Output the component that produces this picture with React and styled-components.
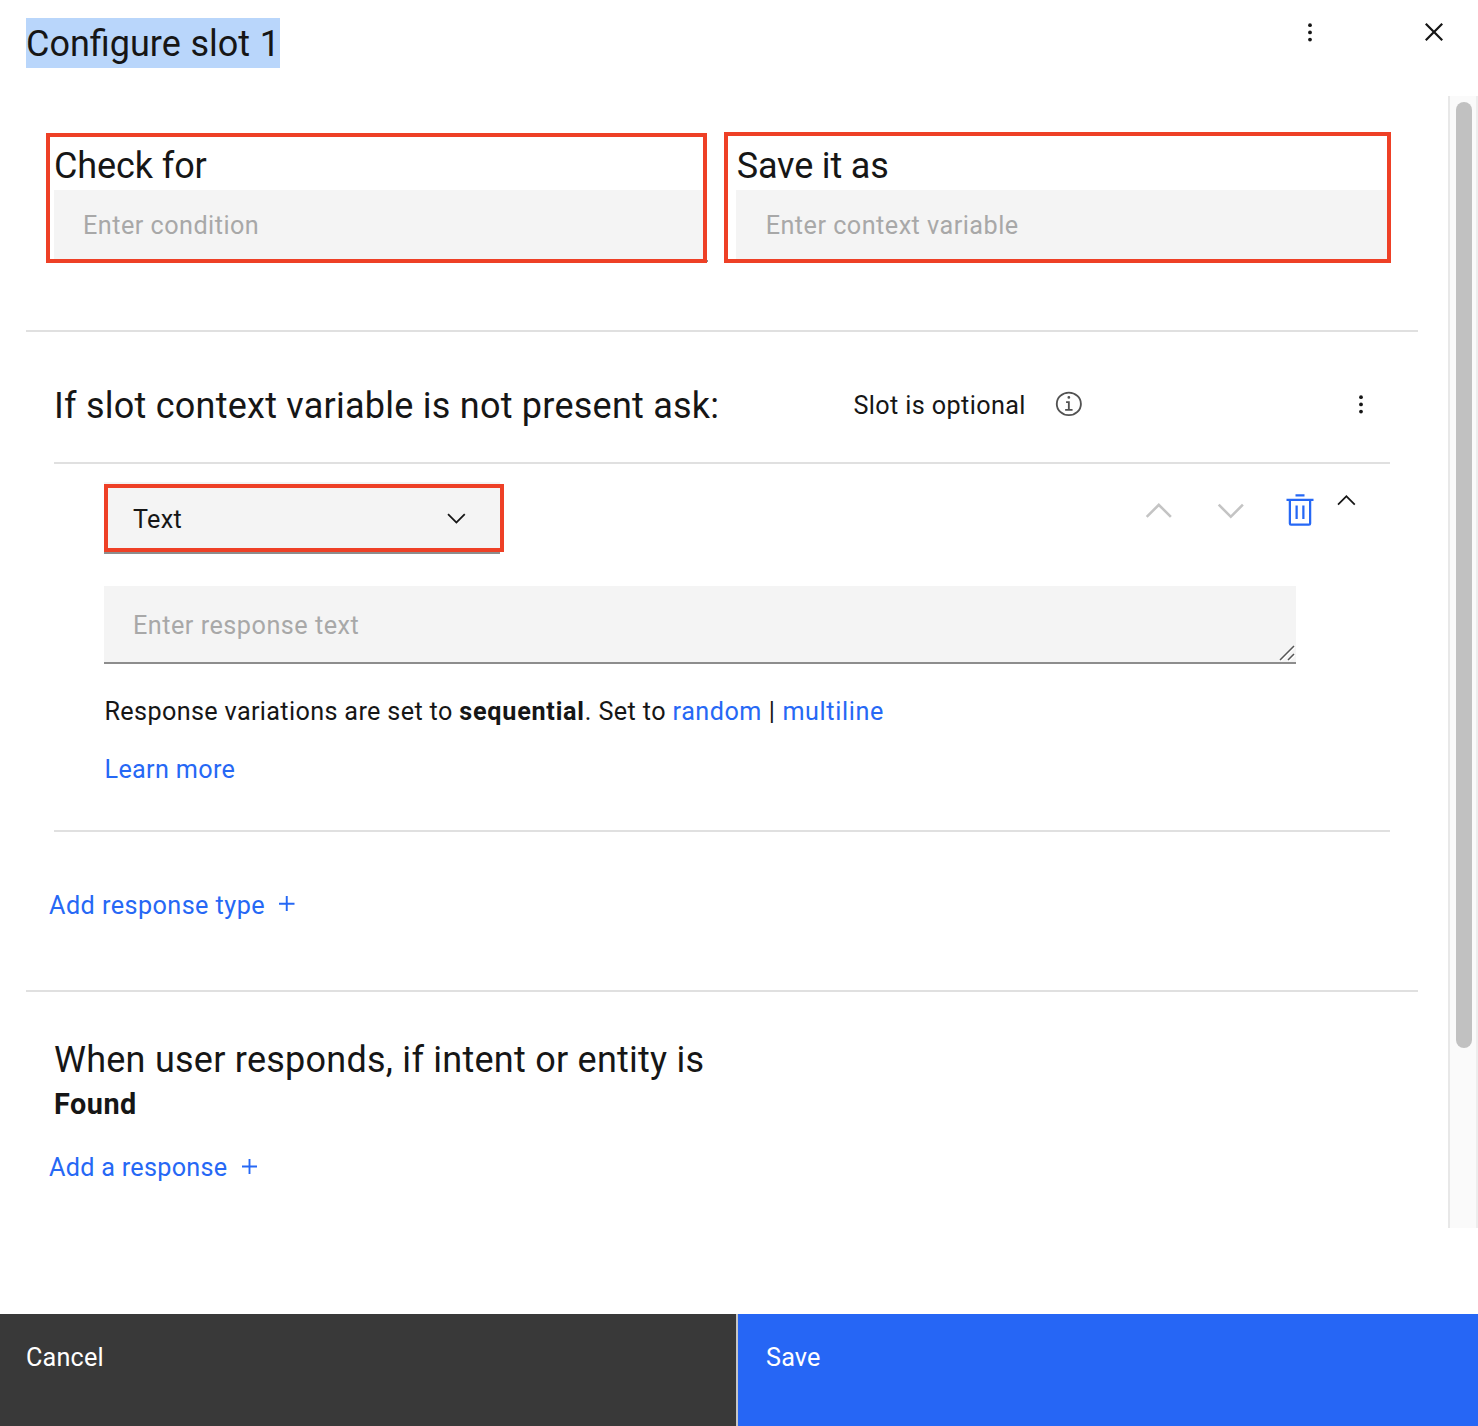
import React from "react";
import styled, { createGlobalStyle } from "styled-components";

const color = {
  text: "#161616",
  placeholder: "#a8a8a8",
  link: "#2668f5",
  field: "#f4f4f4",
  rule: "#e0e0e0",
  underline: "#8d8d8d",
  callout: "#ee4026",
};

const GlobalStyle = createGlobalStyle`
  *, *::before, *::after { box-sizing: border-box; }
  body { margin: 0; background: #fff; }
  body, input, textarea, button { font-family: Roboto, "Liberation Sans", sans-serif; }
`;

const Dialog = styled.div`
  display: flex;
  flex-direction: column;
  width: 1478px;
  height: 1426px;
  overflow: hidden;
  color: ${color.text};
  background: #fff;
`;

const Header = styled.header`
  display: flex;
  align-items: flex-start;
  height: 96px;
  padding: 14px 26px 0;
`;

const Title = styled.h1`
  margin: 4px auto 0 0;
  padding-top: 1px;
  width: 254px;
  height: 50px;
  font-size: 36px;
  font-weight: 400;
  line-height: 50px;
  white-space: nowrap;
  word-spacing: 0.7px;
  background: #b9d6fb;
`;

const IconButton = styled.button`
  display: flex;
  align-items: center;
  justify-content: center;
  flex: none;
  width: ${(p) => p.$width || 36}px;
  height: 36px;
  margin: ${(p) => p.$margin || 0};
  padding: 0;
  border: 0;
  background: none;
  color: ${(p) => p.$color || color.text};

  svg { display: block; flex: none; }
`;

const Body = styled.main`
  display: flex;
  height: 1132px;
`;

const Content = styled.div`
  flex: 1;
  padding: 0 30px 0 26px;
`;

const ScrollTrack = styled.div`
  width: 30px;
  padding: 6px 4px 0 6px;
  border-left: 2px solid #e8e8e8;
  border-right: 2px solid #ededed;
  background: #fafafa;
`;

const ScrollThumb = styled.div`
  width: 16px;
  height: 946px;
  border-radius: 8px;
  background: #c1c1c1;
`;

const Section = styled.section`
  height: ${(p) => p.$height}px;
  border-bottom: ${(p) => (p.$last ? 0 : 2)}px solid ${color.rule};
`;

const ConditionRow = styled.div`
  display: flex;
  align-items: flex-end;
  gap: 17px;
  padding: 36px 0 0 20px;
`;

const ConditionField = styled.label`
  position: relative;
  display: flex;
  flex-direction: column;
  justify-content: flex-end;
  width: ${(p) => p.$width}px;
  height: ${(p) => p.$height}px;
  padding-left: ${(p) => p.$inset}px;
  border: 4px solid ${color.callout};

  &::after {
    content: "";
    position: absolute;
    display: ${(p) => (p.$tail ? "block" : "none")};
    right: -5px;
    bottom: -3px;
    width: 1px;
    height: 2px;
    background: ${color.underline};
  }
`;

const Heading = styled.span`
  padding-left: ${(p) => p.$indent || 0}px;
  font-size: 36px;
  font-weight: 400;
  line-height: 48px;
  white-space: nowrap;
  letter-spacing: ${(p) => p.$track || 0}px;
`;

const TextInput = styled.input`
  width: 100%;
  height: 69px;
  padding: 2px 0 0 ${(p) => p.$indent}px;
  border: 0;
  border-radius: 0;
  outline: 0;
  font-size: 25.2px;
  letter-spacing: 0.48px;
  color: ${color.text};
  background: ${color.field};
  &::placeholder { color: ${color.placeholder}; opacity: 1; }
`;

const PromptHeader = styled.div`
  display: flex;
  align-items: center;
  height: 132px;
  margin: 0 28px;
  padding-top: 14px;
  border-bottom: 2px solid ${color.rule};
`;

const PromptTitle = styled.div`
  width: 799.5px;
  padding-top: 4px;
`;

const BodyText = styled.span`
  font-size: 25.2px;
  line-height: 34px;
  white-space: nowrap;
  letter-spacing: ${(p) => (p.$track === undefined ? 0.5 : p.$track)}px;
`;

const OptionalLabel = styled.div`
  display: flex;
  width: 200.5px;
  padding-top: 4px;
`;

const ResponseCard = styled.div`
  height: 368px;
  margin: 0 28px;
  padding: 18px 0 0 50px;
  border-bottom: 2px solid ${color.rule};
`;

const ResponseToolbar = styled.div`
  display: flex;
  height: 72px;
`;

const TypeSelect = styled.div`
  position: relative;
  display: flex;
  align-items: center;
  justify-content: space-between;
  width: 396px;
  height: 72px;
  margin-right: auto;
  padding: 3px 28.8px 0 29px;
  border-bottom: 2px solid ${color.underline};
  background: ${color.field};

  ${BodyText} { padding-top: 2px; }

  &::after {
    content: "";
    position: absolute;
    top: 2px;
    left: 0;
    width: 400px;
    height: 68px;
    border: 4px solid ${color.callout};
  }
`;

const ResponseBox = styled.div`
  position: relative;
  width: 1192px;
  height: 78px;
  margin-top: 32px;
`;

const ResponseInput = styled.textarea`
  display: block;
  width: 100%;
  height: 100%;
  padding: 23px 29px 0;
  border: 0;
  border-bottom: 2px solid ${color.underline};
  border-radius: 0;
  outline: 0;
  resize: none;
  overflow: hidden;
  font-size: 25.2px;
  line-height: 34px;
  letter-spacing: 0.51px;
  background: ${color.field};
  &::placeholder { color: ${color.placeholder}; opacity: 1; }
`;

const ResizeGrip = styled.svg`
  position: absolute;
  right: 0;
  bottom: 2px;
`;

const Note = styled.p`
  margin: ${(p) => p.$top}px 0 0;
  padding-left: 0.5px;
  font-size: 25.2px;
  line-height: 34px;
  white-space: nowrap;
  letter-spacing: ${(p) => p.$track}px;
`;

const Link = styled.a`
  color: ${color.link};
  letter-spacing: ${(p) => (p.$track === undefined ? "inherit" : p.$track + "px")};
`;

const Strong = styled.strong`
  font-weight: 700;
  letter-spacing: 0.75px;
`;

const AddButton = styled.button`
  display: flex;
  align-items: center;
  gap: ${(p) => p.$gap}px;
  margin: ${(p) => p.$top}px 0 0 23px;
  padding: 0;
  border: 0;
  background: none;
  color: ${color.link};

  svg { display: block; margin-bottom: ${(p) => p.$lift || 0}px; }
`;

const OutcomeTitle = styled.div`
  display: flex;
  flex-direction: column;
  padding: 44px 0 0 28px;
`;

const OutcomeState = styled.strong`
  font-size: 28.8px;
  font-weight: 700;
  line-height: 40px;
  letter-spacing: 0.5px;
`;

const Footer = styled.footer`
  display: flex;
  height: 112px;
  margin-top: 86px;
`;

const FooterButton = styled.button`
  display: flex;
  align-items: flex-start;
  width: ${(p) => (p.$primary ? 742 : 736)}px;
  padding: 27px 0 0 ${(p) => (p.$primary ? 28 : 26)}px;
  border: 0;
  border-left: ${(p) => (p.$primary ? "2px solid #c6c6c6" : "0")};
  color: #fff;
  background: ${(p) => (p.$primary ? "#2666f5" : "#393939")};
`;

const Kebab = () => (
  <svg width="28" height="28.8" viewBox="0.4 0 31.2 32" fill="currentColor">
    <circle cx="16" cy="8" r="2.1" />
    <circle cx="16" cy="16" r="2.1" />
    <circle cx="16" cy="24" r="2.1" />
  </svg>
);

const Close = () => (
  <svg width="36" height="36" viewBox="0 0 32 32" fill="currentColor">
    <path d="M24 9.4 22.6 8 16 14.6 9.4 8 8 9.4 14.6 16 8 22.6 9.4 24 16 17.4 22.6 24 24 22.6 17.4 16z" />
  </svg>
);

const Info = () => (
  <svg width="29.7" height="27.8" viewBox="0 0 16 16" preserveAspectRatio="none" fill="#525252">
    <path d="M8.5 11V6.5h-2v1h1V11H6v1h4v-1zM8 3.5a.75.75 0 1 0 0 1.5.75.75 0 0 0 0-1.5z" />
    <path d="M8 15A7 7 0 1 1 8 1a7 7 0 0 1 0 14zM8 2a6 6 0 1 0 0 12A6 6 0 0 0 8 2z" />
  </svg>
);

const ArrowLarge = ({ down }) => (
  <svg width="41.6" height="41.6" viewBox="0 0 32 32" fill="currentColor">
    {down ? (
      <path d="M16 22 6 12l1.4-1.4 8.6 8.6 8.6-8.6L26 12z" />
    ) : (
      <path d="M16 10l10 10-1.4 1.4-8.6-8.6-8.6 8.6L6 20z" />
    )}
  </svg>
);

const ArrowSmall = ({ down }) => (
  <svg width="28.8" height="28.8" viewBox="0 0 16 16" fill="currentColor">
    {down ? (
      <path d="M8 11 3 6l.7-.7L8 9.6l4.3-4.3.7.7z" />
    ) : (
      <path d="M8 5l5 5-.7.7L8 6.4l-4.3 4.3L3 10z" />
    )}
  </svg>
);

const Trash = () => (
  <svg width="36" height="36" viewBox="0 0 32 32" fill="currentColor">
    <path d="M12 12h2v12h-2zM18 12h2v12h-2zM12 2h8v2h-8z" />
    <path d="M4 6v2h2v20a2 2 0 0 0 2 2h16a2 2 0 0 0 2-2V8h2V6zm4 22V8h16v20z" />
  </svg>
);

const Plus = ({ size }) => (
  <svg width={size} height={size} viewBox="0 0 16 16" fill="currentColor">
    <path d="M7 0h2v7h7v2H9v7H7V9H0V7h7z" />
  </svg>
);

export default function App() {
  return (
    <Dialog>
      <GlobalStyle />
      <Header>
        <Title>Configure slot 1</Title>
        <IconButton aria-label="Slot options" $margin="0 88px 0 0">
          <Kebab />
        </IconButton>
        <IconButton aria-label="Close">
          <Close />
        </IconButton>
      </Header>

      <Body>
        <Content>
          <Section $height={236}>
            <ConditionRow>
              <ConditionField $width={661} $height={130} $inset={4} $tail>
                <Heading $track={-0.1}>Check for</Heading>
                <TextInput placeholder="Enter condition" $indent={29} />
              </ConditionField>
              <ConditionField $width={667} $height={131} $inset={8}>
                <Heading $track={-0.15} $indent={0.7}>Save it as</Heading>
                <TextInput placeholder="Enter context variable" $indent={29.7} />
              </ConditionField>
            </ConditionRow>
          </Section>

          <Section $height={660}>
            <PromptHeader>
              <PromptTitle>
                <Heading $track={0.24}>If slot context variable is not present ask:</Heading>
              </PromptTitle>
              <OptionalLabel>
                <BodyText $track={0.38}>Slot is optional</BodyText>
              </OptionalLabel>
              <Info />
              <IconButton aria-label="Prompt options" $margin="0 11px 0 auto">
                <Kebab />
              </IconButton>
            </PromptHeader>

            <ResponseCard>
              <ResponseToolbar>
                <TypeSelect>
                  <BodyText $track={0.3}>Text</BodyText>
                  <ArrowSmall down />
                </TypeSelect>
                <IconButton aria-label="Move up" $color="#c4c4c4" $margin="11px 36px 0 0">
                  <ArrowLarge />
                </IconButton>
                <IconButton aria-label="Move down" $color="#c4c4c4" $margin="11px 33px 0 0">
                  <ArrowLarge down />
                </IconButton>
                <IconButton aria-label="Delete" $color={color.link} $margin="10px 14px 0 0">
                  <Trash />
                </IconButton>
                <IconButton aria-label="Collapse" $width={28} $margin="0.8px 30px 0 0">
                  <ArrowSmall />
                </IconButton>
              </ResponseToolbar>

              <ResponseBox>
                <ResponseInput placeholder="Enter response text" />
                <ResizeGrip width="17" height="17" viewBox="0 0 17 17" fill="none">
                  <path d="M2 16 16 2M10 16l6-6" stroke="#fff" strokeWidth="1.4" />
                  <path d="M1 15 15 1M9 15l6-6" stroke="#555" strokeWidth="1.5" />
                </ResizeGrip>
              </ResponseBox>

              <Note $top={31} $track={0.35}>
                Response variations are set to <Strong>sequential</Strong>
                <BodyText $track={0.4}>. Set to </BodyText>
                <Link $track={0.5}>random</Link>
                <BodyText $track={0.6}> | </BodyText>
                <Link $track={0.63}>multiline</Link>
              </Note>
              <Note $top={24} $track={0.33}>
                <Link>Learn more</Link>
              </Note>
            </ResponseCard>

            <AddButton $top={57} $gap={14.3} $lift={5}>
              <BodyText $track={0.45}>Add response type</BodyText>
              <Plus size={15.5} />
            </AddButton>
          </Section>

          <Section $height={236} $last>
            <OutcomeTitle>
              <Heading $track={0.25}>When user responds, if intent or entity is</Heading>
              <OutcomeState>Found</OutcomeState>
            </OutcomeTitle>
            <AddButton $top={27} $gap={14.8} $lift={3}>
              <BodyText $track={0.28}>Add a response</BodyText>
              <Plus size={15} />
            </AddButton>
          </Section>
        </Content>
        <ScrollTrack>
          <ScrollThumb />
        </ScrollTrack>
      </Body>

      <Footer>
        <FooterButton>
          <BodyText $track={0.2}>Cancel</BodyText>
        </FooterButton>
        <FooterButton $primary>
          <BodyText $track={0.2}>Save</BodyText>
        </FooterButton>
      </Footer>
    </Dialog>
  );
}
